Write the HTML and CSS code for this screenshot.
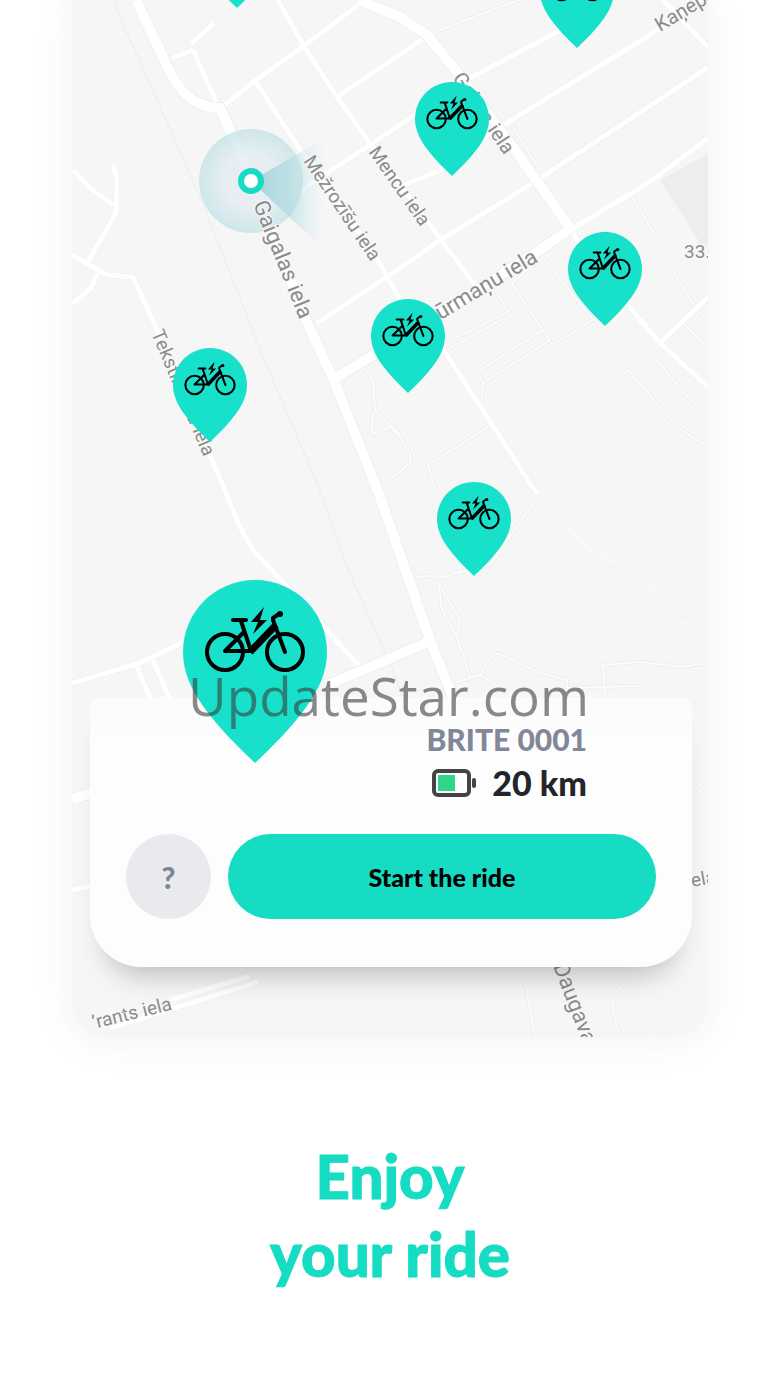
FILE: index.html
```html
<!DOCTYPE html>
<html lang="en">

<head>
  <meta charset="UTF-8" />
  <meta name="viewport" content="width=device-width, initial-scale=1.0" />
  <title>Enjoy your ride</title>
  <link rel="stylesheet" href="styles.css">
</head>

<body>
  <main class="page">
    <section class="phone">
      <svg class="map" viewBox="72 0 636 1037" preserveAspectRatio="xMidYMin slice" role="img" aria-label="Map of nearby bikes">
        <defs>
          <symbol id="pin" viewBox="0 0 144 183">
            <path fill="#17e1cb" d="M72 0C32 0 0 32 0 72c0 21 9 38 20 54 15 21 33 39 52 57 19-18 37-36 52-57 11-16 20-33 20-54C144 32 112 0 72 0z" />
            <g fill="none" stroke="#000" stroke-width="4" stroke-linecap="round" stroke-linejoin="round">
              <circle cx="42" cy="72" r="18" />
              <circle cx="102" cy="72" r="18" />
              <path d="M50 40h13M58 41l10 30H42l19-19M90 40l12 32M90 38l6-4" />
              <path stroke-width="7" stroke-linecap="butt" d="M67 72l26-27" />
            </g>
            <circle cx="97" cy="34" r="3" />
            <path d="M81 27L68 42h7l-5 12 14-14h-7z" />
          </symbol>
          <radialGradient id="halo">
            <stop offset="0" stop-color="#f0e9f4" />
            <stop offset="0.5" stop-color="#e2edf1" stop-opacity="0.8" />
            <stop offset="1" stop-color="#c5e3e6" stop-opacity="0.8" />
          </radialGradient>
          <linearGradient id="beam">
            <stop offset="0" stop-color="#98d0d9" stop-opacity="0.9" />
            <stop offset="0.5" stop-color="#a9d8df" stop-opacity="0.6" />
            <stop offset="1" stop-color="#d5eef0" stop-opacity="0" />
          </linearGradient>
        </defs>

        <path fill="#eceeee" d="M660 180l48-26v91l-8-2z" />
        <path class="rail" d="M114 0l6 17 37 83 43 97 33 83 27 70 57 133 30 84 46 103 14 40" />

        <!-- footpaths, drawn as a grey edge with a white core -->
        <g class="paths-casing">
          <path id="paths" d="M415 578q12-4 25 0l20-6 30-7 47-67M437 580l23 40-3 17 13 40M438 580l4 30 15 27M460 572v-14M453 683l27-8 12-20q6-2 10 0l38 18 27 7v17M480 675l20 12M708 663l-26 4-42-5-37 3 2 32M567 688l70-2M488 427l-60 38 8 28M543 330l-66 42 6 11-1 14-5 2M483 383l67-43M447 350l50-28 4 5M463 341l5 9M543 257l-31 26M543 257l50 63M512 283l40 62 41-25M496 291l12 22M455 338l56-28M630 193l30 50M672 270l21 33 15 20M683 323l25 24M660 343l-7 12 37 45 18 15M620 378l8-8 49 57 31 20M513 127l25 40M477 153l6 14M363 367l10 13 2 30 25 27 10 16v10l-20 17M375 410q-5 15-2 24l17-7M386 422l14 12M427 35L540-8M525 980l10 57M622 985q-12 15-9 25l7 27M692 780l16 10" />
        </g>
        <use class="paths" href="#paths" />
        <path class="trail" d="M540 503l47 44 56 33 37 40 26 15" />

        <g class="roads-casing">
          <g id="roads">
            <path d="M222 107l34-27 49-35 60-45M278 0l25 45 34 52 33 46 60 82 45 60M256 82l44 68 75 105 25 45 45 52 92 142" />
            <path d="M337 97l90-61M273 210l54-37 40-26 103-69 87-46 43-24M400 187l40-17 60-43 153-94 55-38M317 323l76-50 47-33 93-57 174-115M570 230l80-48 58-44M663 0l45 47M570 228l7 12 63 80 20 23 48 44M660 343l48-46" />
            <path d="M73 170l17 18 23 17M113 165l4 15-1 33-29 50M72 255l35 20 26 2 24 53 56 132 27 65 13 23 30 32 80 88M97 273l-5 14-20 17M72 683l68-20 43-21M137 667l14 33M153 660l17 40M172 58l21-8M193 50l26 58M191 44l23-21" />
            <path d="M72 890l18-4M110 1028l148-46M170 1000l80-24" />
          </g>
        </g>
        <use class="roads" href="#roads" />
        <g class="main-roads-casing">
          <g id="main-roads">
            <path d="M136 0l34 72q18 36 50 36l28 62 58 150 29 63 45 114 50 143 24 60M337 377l33-20 60-37 110-70 30-21M330 684l98-42M72 799l20-6" />
            <path d="M358 0l42 17 27 18 26 32 62 83 55 78" />
          </g>
        </g>
        <use class="main-roads" href="#main-roads" />

        <circle cx="251" cy="181" r="52" fill="url(#halo)" />
        <path fill="url(#beam)" d="M251 181l76-44v44l-10 62z" />
        <circle cx="251" cy="181" r="10" fill="#fff" stroke="#17dcc3" stroke-width="6" />

        <g class="labels">
          <text transform="translate(253 204) rotate(68)" font-size="22">Gaigalas iela</text>
          <text transform="translate(303 161) rotate(56)" font-size="19">Mežrozīšu iela</text>
          <text transform="translate(368 152) rotate(55)" font-size="19">Mencu iela</text>
          <text transform="translate(452 78) rotate(56)" font-size="20">Gobas iela</text>
          <text transform="translate(539 261) rotate(-31)" font-size="22" text-anchor="end">Stūrmaņu iela</text>
          <text transform="translate(660 32) rotate(-31)" font-size="20">Kaņepju iela</text>
          <text transform="translate(151 333) rotate(67)" font-size="19">Tekstilnieka iela</text>
          <text transform="translate(94 1029) rotate(-14)" font-size="19">’rants iela</text>
          <text transform="translate(553 966) rotate(69)" font-size="22">Daugavas</text>
          <text x="684" y="258" font-size="19">33.</text>
          <text transform="translate(692 887) rotate(-10)" font-size="19">ela</text>
        </g>

        <use href="#pin" x="200" y="-86" width="74" height="94" />
        <use href="#pin" x="540" y="-46" width="74" height="94" />
        <use href="#pin" x="415" y="82" width="74" height="94" />
        <use href="#pin" x="568" y="232" width="74" height="94" />
        <use href="#pin" x="371" y="299" width="74" height="94" />
        <use href="#pin" x="173" y="348" width="74" height="94" />
        <use href="#pin" x="437" y="482" width="74" height="94" />
      </svg>

      <div class="card">
        <svg class="selected-pin" viewBox="0 0 144 183" aria-hidden="true"><use href="#pin" /></svg>
        <span class="watermark">UpdateStar.com</span>
        <div class="bike">
          <h2 class="bike-name">BRITE 0001</h2>
          <p class="bike-range">
            <svg class="battery" viewBox="0 0 44 28" aria-hidden="true">
              <rect x="2" y="2" width="35" height="24" rx="4" fill="#fff" stroke="#444" stroke-width="4" />
              <rect x="6" y="6" width="17" height="16" fill="#2fd68a" />
              <rect x="40" y="9" width="4" height="10" rx="2" fill="#444" />
            </svg>
            20 km
          </p>
        </div>
        <div class="actions">
          <button class="help" type="button" aria-label="Help">?</button>
          <button class="start" type="button">Start the ride</button>
        </div>
      </div>
    </section>

    <h1 class="headline">Enjoy<br>your ride</h1>
  </main>
</body>

</html>
```
FILE: styles.css
```css
* {
  margin: 0;
  padding: 0;
  box-sizing: border-box;
}

body {
  background: #fff;
  font-family: Lato, "Liberation Sans", sans-serif;
}

.page {
  overflow: hidden;
}

/* map and card share one grid cell */
.phone {
  display: grid;
  margin: 0 72px;
  background: #f6f6f6;
  border-radius: 0 0 36px 36px;
  box-shadow: 0 0 16px 4px #f8f8f8, 0 4px 48px rgba(0, 0, 0, 0.05);
}

.map {
  grid-area: 1 / 1;
  display: block;
  width: 100%;
  border-radius: 0 0 36px 36px;
}

.rail,
.paths,
.paths-casing,
.trail,
.roads,
.roads-casing,
.main-roads,
.main-roads-casing {
  fill: none;
  stroke-linejoin: round;
}

.rail {
  stroke: #eaecec;
  stroke-width: 1;
}

.paths-casing,
.roads-casing,
.main-roads-casing {
  stroke: #edf0f0;
}

.paths,
.trail,
.roads,
.main-roads {
  stroke: #fff;
}

.paths-casing {
  stroke-width: 4;
}

.paths {
  stroke: #fbfcfc;
  stroke-width: 2;
}

.trail {
  stroke: #f9fafa;
  stroke-width: 2;
}

.roads-casing {
  stroke-width: 6;
}

.roads {
  stroke-width: 5;
}

.main-roads-casing {
  stroke-width: 12;
}

.main-roads {
  stroke-width: 10;
}

.labels {
  fill: #8b8b8b;
  stroke: #f9f9f9;
  stroke-width: 2;
  paint-order: stroke;
  font-family: Roboto, "Liberation Sans", sans-serif;
}

.card {
  grid-area: 1 / 1;
  align-self: end;
  position: relative;
  margin: 0 16px 70px 18px;
  padding: 24px 36px 48px;
  border-radius: 12px 12px 52px 52px;
  background: linear-gradient(rgba(253, 253, 253, 0.75), #fdfdfd 36px);
  box-shadow: 0 24px 28px -16px rgba(0, 0, 0, 0.24);
}

.selected-pin {
  position: absolute;
  top: -117px;
  left: 93px;
  width: 144px;
}

.watermark {
  position: absolute;
  top: -37px;
  right: 103px;
  font-family: "Open Sans", "Noto Sans", sans-serif;
  font-size: 53px;
  line-height: 72px;
  white-space: nowrap;
  color: rgba(60, 60, 60, 0.6);
}

.bike {
  display: flex;
  flex-direction: column;
  align-items: flex-end;
  gap: 6px;
  margin: 0 69px 31px 0;
}

.bike-name {
  font-size: 30px;
  font-weight: 900;
  line-height: 36px;
  color: #818798;
}

.bike-range {
  display: flex;
  align-items: center;
  gap: 16px;
  font-size: 34px;
  font-weight: 900;
  line-height: 40px;
  color: #22262c;
}

.battery {
  width: 44px;
}

.actions {
  display: flex;
  gap: 17px;
}

.actions button {
  height: 85px;
  border: 0;
  font-family: inherit;
  font-weight: 900;
}

.help {
  flex: 0 0 85px;
  border-radius: 50%;
  background: #e8eaee;
  color: #808591;
  font-size: 30px;
}

.start {
  flex: 1;
  border-radius: 43px;
  background: #15dcc2;
  color: #000;
  font-size: 25px;
}

.headline {
  margin: 100px 24px;
  text-align: center;
  font-size: 60px;
  font-weight: 900;
  line-height: 78px;
  color: #15dcc2;
  -webkit-text-stroke: 1px #15dcc2;
}
```
